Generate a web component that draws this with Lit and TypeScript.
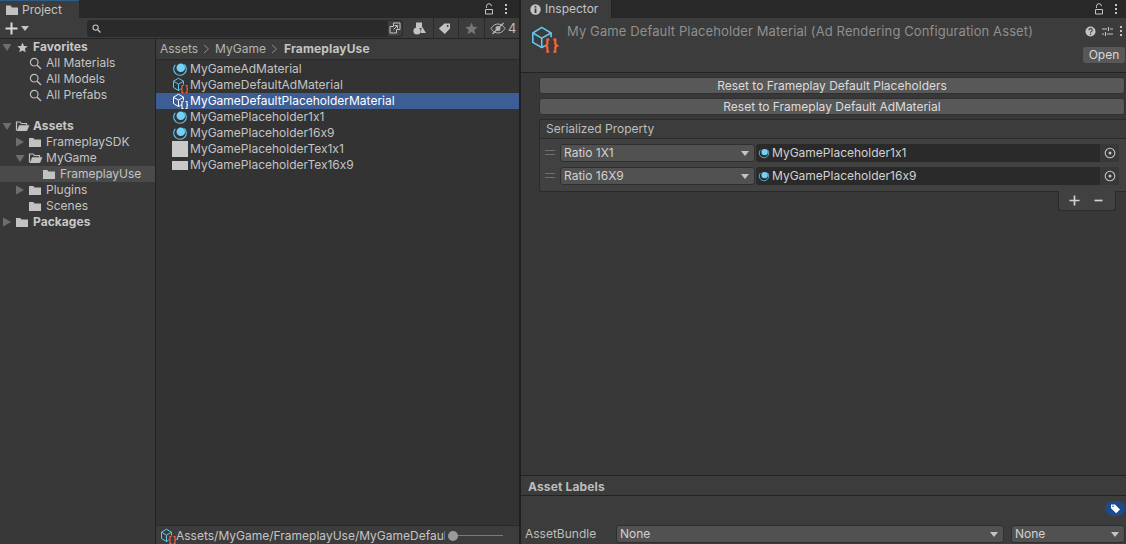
import { LitElement, html, css, svg } from "lit";
import { customElement } from "lit/decorators.js";

const icon = (w: number, h: number, body: unknown, vb = `0 0 ${w} ${h}`) =>
  html`<svg class="ic" width=${w} height=${h} viewBox=${vb} fill="none" style="width:${w}px;height:${h}px">${body}</svg>`;

const folder = (c = "#c2c2c2") =>
  icon(14, 12, svg`<path d="M1 2h4.200l1.300 1.500H13V11H1z" fill=${c}/>`);
const folderOpen = (c = "#c2c2c2") =>
  icon(15, 12, svg`<path d="M1.500 10.500V2h3.600l1.200 1.500h5.200V5" stroke=${c} stroke-width="1.200"/><path d="M2.400 10.500 4.300 5.400H14l-2 5.100z" fill=${c} stroke=${c} stroke-width=".6"/><path d="M2 10.500h9" stroke=${c}/>`);
const magnifier = () =>
  icon(13, 13, svg`<circle cx="5.200" cy="5.200" r="3.800" stroke="#bdbdbd" stroke-width="1.200"/><path d="m8 8 4 4" stroke="#bdbdbd" stroke-width="1.500"/>`);
const star = (c = "#c4c4c4", s = 11) =>
  icon(s, s, svg`<path d="M6 .5 7.600 4.300l4.100.3-3.100 2.700 1 4L6 9.200l-3.600 2.100 1-4L.3 4.600l4.100-.3z" fill=${c}/>`, "0 0 12 12");
const tri = (open: boolean) =>
  open
    ? icon(10, 8, svg`<path d="M.5 1h9L5 8z" fill="#6e6e6e"/>`)
    : icon(8, 10, svg`<path d="M0 .5 8 5 0 9.500z" fill="#6e6e6e"/>`);
const ball = (s = 16) =>
  icon(s, s, svg`<path d="M3.300 3.800A6.300 6.300 0 1 0 12.400 3.500" stroke="#62c6f1" stroke-width="1.100"/><circle cx="8.800" cy="6.800" r="4.300" fill="#74d0f7"/>`, "0 0 16 16");
const cube = (s: number, c: string, b: string) =>
  icon(s, s, svg`
    <path d="M8.500 12.300 6.500 13.500l-5-3V4.200l5-3 5 3V7.500" stroke=${c} stroke-width="1" stroke-linejoin="round"/>
    <path d="M1.500 4.200 6.500 7.200l5-3M6.500 7.200v6.300" stroke=${c} stroke-width="1"/>
    <path d="M11.500 8.500H10v2.800l-.8.700.8.700v2.800h1.500M13.500 8.500H15v2.800l.8.700-.8.700v2.800h-1.500" stroke=${b} stroke-width="1.100"/>`,
    "0 0 16 16");
const lock = () =>
  icon(10, 12, svg`<path d="M2.500 5V3.200a2.500 2.500 0 0 1 5 0" stroke="#c4c4c4"/><path d="M1.500 6.500h7v4.500h-7z" stroke="#c4c4c4"/>`);
const dots = () =>
  icon(4, 12, svg`<g fill="#c4c4c4"><rect x="1" y="1" width="2" height="2"/><rect x="1" y="5" width="2" height="2"/><rect x="1" y="9" width="2" height="2"/></g>`);
const caret = (c = "#c4c4c4") => icon(8, 5, svg`<path d="M0 0h8L4 5z" fill=${c}/>`);
const target = () =>
  icon(12, 12, svg`<circle cx="6" cy="6" r="4.800" stroke="#c4c4c4" stroke-width="1.100"/><circle cx="6" cy="6" r="1.500" fill="#c4c4c4"/>`);

type TreeRow = { label: string; depth: number; kind: string; bold?: boolean; tri?: "open" | "closed"; sel?: boolean; gap?: boolean };
const tree: TreeRow[] = [
  { label: "Favorites", depth: 0, kind: "star", bold: true, tri: "open" },
  { label: "All Materials", depth: 1, kind: "search" },
  { label: "All Models", depth: 1, kind: "search" },
  { label: "All Prefabs", depth: 1, kind: "search" },
  { label: "Assets", depth: 0, kind: "open", bold: true, tri: "open", gap: true },
  { label: "FrameplaySDK", depth: 1, kind: "folder", tri: "closed" },
  { label: "MyGame", depth: 1, kind: "open", tri: "open" },
  { label: "FrameplayUse", depth: 2, kind: "folder", sel: true },
  { label: "Plugins", depth: 1, kind: "folder", tri: "closed" },
  { label: "Scenes", depth: 1, kind: "folder" },
  { label: "Packages", depth: 0, kind: "folder", bold: true, tri: "closed" },
];

const files = [
  { label: "MyGameAdMaterial", kind: "ball" },
  { label: "MyGameDefaultAdMaterial", kind: "cube" },
  { label: "MyGameDefaultPlaceholderMaterial", kind: "cube", sel: true },
  { label: "MyGamePlaceholder1x1", kind: "ball" },
  { label: "MyGamePlaceholder16x9", kind: "ball" },
  { label: "MyGamePlaceholderTex1x1", kind: "tex1" },
  { label: "MyGamePlaceholderTex16x9", kind: "tex2" },
];

@customElement("project-panel")
class ProjectPanel extends LitElement {
  static styles = css`
    :host { display: flex; flex-direction: column; width: 519px; height: 544px; background: #383838; color: #c4c4c4; font: 12px/16px Inter, "Liberation Sans", sans-serif; font-feature-settings: "calt" 0; }
    .ic { display: block; flex: none; }
    .tabs { height: 18px; flex: none; display: flex; background: #282828; align-items: center; }
    .tab { width: 79px; height: 18px; box-sizing: border-box; background: #3c3c3c; border-top: 1px solid #2c5d87; display: flex; align-items: center; gap: 4px; padding-left: 6px; }
    .acts { margin-left: auto; display: flex; align-items: center; gap: 10px; padding-right: 11px; }
    .toolbar { height: 20px; flex: none; display: flex; align-items: center; background: #3c3c3c; border-bottom: 1px solid #232323; box-sizing: content-box; }
    .add { width: 87px; display: flex; align-items: center; padding-left: 5px; gap: 3px; box-sizing: border-box; }
    .search { width: 316px; height: 17px; background: #2a2a2a; border-radius: 4px; display: flex; align-items: center; justify-content: space-between; padding-left: 5px; box-sizing: border-box; }
    .expand { width: 16px; height: 17px; background: #3f3f3f; border: 1px solid #2a2a2a; border-radius: 0 4px 4px 0; box-sizing: border-box; display: grid; place-items: center; }
    .tools { display: flex; margin-left: 3px; height: 20px; flex: 1; }
    .tool { display: grid; place-items: center; height: 20px; border-left: 1px solid #2b2b2b; box-sizing: border-box; }
    .tool:first-child { border-left: 0; }
    .t1 { width: 27px; } .t2 { width: 25px; padding-right: 3px; } .t3 { width: 26px; } .t4 { flex: 1; display: flex; align-items: center; gap: 2px; padding-left: 5px; font-size: 13px; color: #bdbdbd; }
    .main { flex: 1; min-height: 0; display: flex; }
    .tree { width: 156px; flex: none; box-sizing: border-box; border-right: 1px solid #232323; background: #383838; }
    .row { height: 16px; display: flex; align-items: center; white-space: nowrap; }
    .row.gap { margin-top: 15px; }
    .row.sel { background: #4a4a4a; }
    .row b { font-weight: 700; color: #c8c8c8; letter-spacing: .05px; }
    .tri { width: 14px; flex: none; display: flex; justify-content: center; }
    .ico { width: 16px; flex: none; display: flex; justify-content: center; margin-right: 3px; }
    .files { flex: 1; min-width: 0; display: flex; flex-direction: column; background: #333333; }
    .crumb { height: 20px; flex: none; display: flex; align-items: center; padding-left: 4px; gap: 5px; background: #3c3c3c; border-bottom: 1px solid #2a2a2a; color: #b4b4b4; }
    .crumb b { color: #c4c4c4; font-weight: 700; letter-spacing: .15px; margin-left: 1px; }
    .list { flex: 1; padding-top: 1px; }
    .file { height: 16px; display: flex; align-items: center; padding-left: 16px; gap: 2px; white-space: nowrap; }
    .file.sel { background: #3d5d95; color: #fff; }
    .tex { width: 16px; height: 16px; flex: none; display: flex; align-items: center; }
    .tex i { display: block; width: 16px; background: #c9c9c9; }
    .tex i.a { height: 16px; }
    .tex i.b { height: 9px; }
    .status { height: 17px; padding-top: 1px; flex: none; display: flex; align-items: center; background: #3c3c3c; border-top: 1px solid #2a2a2a; padding-left: 4px; }
    .path { width: 269px; overflow: hidden; white-space: nowrap; color: #c4c4c4; }
    .slider { width: 55px; margin-left: 3px; display: flex; align-items: center; height: 10px; }
    .track { flex: 1; height: 1px; background: #7a7a7a; }
    .knob { width: 10px; height: 10px; border-radius: 50%; background: #9a9a9a; flex: none; }
  `;
  private treeIcon(k: string) {
    if (k === "star") return star();
    if (k === "search") return magnifier();
    if (k === "open") return folderOpen();
    return folder();
  }
  private fileIcon(k: string, sel?: boolean) {
    if (k === "ball") return ball();
    if (k === "cube") return sel ? cube(16, "#fff", "#fff") : cube(16, "#62c6f1", "#ff6436");
    return html`<span class="tex"><i class=${k === "tex1" ? "a" : "b"}></i></span>`;
  }
  render() {
    return html`
      <div class="tabs">
        <div class="tab">${icon(12, 12, svg`<path d="M0 1.500h4.500L6 3.500h6V11H0z" fill="#c2c2c2"/>`)}<span>Project</span></div>
        <div class="acts">${lock()}${dots()}</div>
      </div>
      <div class="toolbar">
        <div class="add">
          ${icon(13, 13, svg`<path d="M6.500 .5v12M.5 6.500h12" stroke="#d8d8d8" stroke-width="2"/>`)}${caret()}
        </div>
        <div class="search">
          ${icon(9, 9, svg`<circle cx="3.600" cy="3.600" r="2.600" stroke="#c4c4c4" stroke-width="1.100"/><path d="m5.500 5.500 3 3" stroke="#c4c4c4" stroke-width="1.300"/>`)}
          <div class="expand">${icon(12, 12, svg`<path d="M4.500 1h6.500v6.500H7.500V11H1V4.500h3.500z" stroke="#c4c4c4"/><path d="m4.500 7.500 3.500-3.500M5.500 3.500H8.500V6.500" stroke="#c4c4c4"/>`)}</div>
        </div>
        <div class="tools">
          <div class="tool t1">${icon(13, 13, svg`<rect x="3" y=".5" width="6" height="5.500" fill="#c2c2c2"/><circle cx="4" cy="9" r="3.600" fill="#c2c2c2"/><path d="M9 4.500 13 11H7.500z" fill="#c2c2c2"/>`)}</div>
          <div class="tool t2">${icon(13, 13, svg`<path d="M.8 6.500 6.500 1.500H12v5L6.800 12z" fill="#c2c2c2"/><circle cx="9.600" cy="3.900" r="1" fill="#3c3c3c"/>`)}</div>
          <div class="tool t3">${star("#767676", 13)}</div>
          <div class="tool t4">
            ${icon(16, 13, svg`<path d="M1 6.500C3 3.300 5.500 2 8 2s5 1.300 7 4.500C13 9.700 10.500 11 8 11S3 9.700 1 6.500z" stroke="#b4b4b4"/><circle cx="8" cy="6.500" r="2.500" fill="#b4b4b4"/><path d="M2.500 12 13.500 1" stroke="#b4b4b4" stroke-width="1.200"/>`)}
            <span>4</span>
          </div>
        </div>
      </div>
      <div class="main">
        <div class="tree">
          ${tree.map(
            (r) => html`<div class="row ${r.sel ? "sel" : ""} ${r.gap ? "gap" : ""}" style="padding-left:${r.depth ? r.depth * 14 - 1 : 0}px">
              <span class="tri">${r.tri ? tri(r.tri === "open") : ""}</span>
              <span class="ico">${this.treeIcon(r.kind)}</span>
              ${r.bold ? html`<b>${r.label}</b>` : html`<span>${r.label}</span>`}
            </div>`
          )}
        </div>
        <div class="files">
          <div class="crumb">
            <span>Assets</span>${icon(7, 10, svg`<path d="m1 1 4.500 4L1 9" stroke="#8a8a8a"/>`)}
            <span>MyGame</span>${icon(7, 10, svg`<path d="m1 1 4.500 4L1 9" stroke="#8a8a8a"/>`)}
            <b>FrameplayUse</b>
          </div>
          <div class="list">
            ${files.map(
              (f) => html`<div class="file ${f.sel ? "sel" : ""}">${this.fileIcon(f.kind, f.sel)}<span>${f.label}</span></div>`
            )}
          </div>
          <div class="status">
            ${cube(16, "#62c6f1", "#ff6436")}
            <div class="path">Assets/MyGame/FrameplayUse/MyGameDefault</div>
            <div class="slider"><span class="knob"></span><span class="track"></span></div>
          </div>
        </div>
      </div>
    `;
  }
}

@customElement("inspector-panel")
class InspectorPanel extends LitElement {
  static styles = css`
    :host { display: flex; flex-direction: column; flex: 1; min-width: 0; height: 544px; background: #383838; color: #c4c4c4; font: 12px/16px Inter, "Liberation Sans", sans-serif; font-feature-settings: "calt" 0; }
    .ic { display: block; flex: none; }
    .tabs { height: 18px; flex: none; display: flex; background: #282828; align-items: center; }
    .tab { width: 91px; height: 18px; background: #3c3c3c; display: flex; align-items: center; gap: 4px; padding-left: 9px; box-sizing: border-box; border-right: 1px solid #232323; }
    .acts { margin-left: auto; display: flex; align-items: center; gap: 10px; padding-right: 8px; }
    .head { height: 55px; flex: none; box-sizing: border-box; background: #3c3c3c; border-bottom: 1px solid #232323; display: grid; grid-template-columns: 46px 1fr auto; padding-top: 5px; }
    .bigicon { padding: 3px 0 0 9px; }
    .title { font-size: 13px; line-height: 16px; color: #8f8f8f; white-space: nowrap; letter-spacing: .11px; }
    .hright { display: flex; flex-direction: column; align-items: flex-end; gap: 10px; padding-right: 1px; }
    .hicons { display: flex; align-items: center; gap: 6px; height: 12px; padding: 2px 2px 0 0; }
    .open { width: 42px; height: 16px; background: #585858; border-radius: 3px; text-align: center; line-height: 16px; color: #d8d8d8; }
    .body { flex: 1; min-height: 0; padding: 4px 1px 0 18px; display: flex; flex-direction: column; }
    .btn { height: 17px; background: #585858; border: 1px solid #303030; border-radius: 3px; text-align: center; line-height: 15px; color: #dcdcdc; margin-bottom: 4px; box-sizing: border-box; }
    .box { margin-right: -1px; background: #414141; border: 1px solid #2a2a2a; border-right: 0; border-radius: 3px 0 0 3px; display: flex; flex-direction: column; height: 73px; box-sizing: border-box; }
    .boxh { height: 18px; flex: none; background: #3c3c3c; border-bottom: 1px solid #2a2a2a; padding-left: 6px; line-height: 17px; color: #bdbdbd; border-radius: 3px 0 0 0; }
    .items { padding: 5px 7px 0 5px; display: grid; gap: 5px; }
    .item { display: grid; grid-template-columns: 15px 195px 1fr; height: 18px; align-items: stretch; }
    .grip { display: flex; flex-direction: column; gap: 3px; justify-content: center; padding-bottom: 2px; }
    .grip i { display: block; width: 10px; height: 1px; background: #6e6e6e; }
    .drop { background: #515151; border: 1px solid #2f2f2f; border-radius: 3px; display: flex; align-items: center; justify-content: space-between; padding: 0 5px 0 3px; box-sizing: border-box; color: #d2d2d2; }
    .obj { background: #2a2a2a; border-radius: 3px; margin-left: 1px; display: flex; align-items: center; gap: 2px; padding-left: 2px; color: #d2d2d2; }
    .pick { margin-left: auto; width: 19px; align-self: stretch; background: #383838; border-radius: 0 3px 3px 0; display: grid; place-items: center; }
    .foot { align-self: flex-end; width: 58px; height: 20px; box-sizing: border-box; margin: -1px 9px 0 0; padding-right: 2px; background: #414141; border: 1px solid #2a2a2a; border-top: 0; border-radius: 0 0 3px 3px; display: flex; align-items: center; justify-content: center; gap: 14px; }
    .labels { height: 69px; flex: none; background: #3c3c3c; border-top: 1px solid #232323; display: flex; flex-direction: column; box-sizing: border-box; }
    .labh { height: 20px; flex: none; font-weight: 700; padding-left: 7px; line-height: 22px; border-bottom: 1px solid #232323; color: #bdbdbd; letter-spacing: .15px; box-sizing: border-box; }
    .tagrow { height: 29px; flex: none; display: flex; justify-content: flex-end; align-items: center; padding: 0 1px 4px 0; box-sizing: border-box; }
    .tag { width: 20px; height: 15px; border-radius: 8px; background: #1f4a8a; display: grid; place-items: center; }
    .bundle { display: grid; grid-template-columns: 92px 388px 121px; height: 16px; align-items: stretch; padding-left: 3px; }
    .bundle > span { color: #bdbdbd; line-height: 18px; padding-left: 1px; }
    .drop.b2 { margin-left: 7px; }
  `;
  render() {
    return html`
      <div class="tabs">
        <div class="tab">${icon(11, 11, svg`<circle cx="5.500" cy="5.500" r="5.200" fill="#c4c4c4"/><rect x="4.600" y="4.500" width="1.800" height="4.500" fill="#3c3c3c"/><rect x="4.600" y="2" width="1.800" height="1.600" fill="#3c3c3c"/>`)}<span>Inspector</span></div>
        <div class="acts">${lock()}${dots()}</div>
      </div>
      <div class="head">
        <div class="bigicon">${icon(30, 30, svg`
          <path d="M16 21 12.500 23 3 17.500v-10l9.500-6 10 6V12" stroke="#62c6f1" stroke-width="1.700" stroke-linejoin="round"/>
          <path d="M3 7.500 12.500 13l10-5.500M12.500 13v10" stroke="#62c6f1" stroke-width="1.700"/>
          <path d="M20.500 14.500h-2v5l-2 1.500 2 1.500v5h2M25 14.500h2v5l2 1.500-2 1.500v5h-2" stroke="#ff6436" stroke-width="2.200"/>`, "0 0 32 32")}</div>
        <div class="title">My Game Default Placeholder Material (Ad Rendering Configuration Asset)</div>
        <div class="hright">
          <div class="hicons">
            ${icon(11, 11, svg`<circle cx="5.500" cy="5.500" r="5" fill="#c4c4c4"/><path d="M3.800 4.200c.2-2.200 3.500-2 3.500 0 0 1.200-1.800 1.200-1.800 2.500" stroke="#3c3c3c" stroke-width="1.100"/><rect x="4.900" y="7.700" width="1.300" height="1.300" fill="#3c3c3c"/>`)}
            ${icon(11, 11, svg`<path d="M0 3h5M8 3h3M0 8h2M5 8h6M6.500 1v4M3.500 6v4" stroke="#c4c4c4" stroke-width="1.100"/>`)}
            ${dots()}
          </div>
          <div class="open">Open</div>
        </div>
      </div>
      <div class="body">
        <div class="btn">Reset to Frameplay Default Placeholders</div>
        <div class="btn">Reset to Frameplay Default AdMaterial</div>
        <div class="box">
          <div class="boxh">Serialized Property</div>
          <div class="items">
            ${[["Ratio 1X1", "MyGamePlaceholder1x1"], ["Ratio 16X9", "MyGamePlaceholder16x9"]].map(
              ([a, b]) => html`<div class="item">
                <div class="grip"><i></i><i></i></div>
                <div class="drop"><span>${a}</span>${caret()}</div>
                <div class="obj">${ball(12)}<span>${b}</span><span class="pick">${target()}</span></div>
              </div>`
            )}
          </div>
        </div>
        <div class="foot">
          ${icon(11, 11, svg`<path d="M5.500 .5v10M.5 5.500h10" stroke="#d2d2d2" stroke-width="1.700"/>`)}
          ${icon(9, 11, svg`<path d="M.5 5.500h8" stroke="#d2d2d2" stroke-width="1.700"/>`)}
        </div>
      </div>
      <div class="labels">
        <div class="labh">Asset Labels</div>
        <div class="tagrow"><div class="tag">${icon(11, 11, svg`<path fill-rule="evenodd" d="M1 1.500h4l5 5-3.800 3.800-5.200-5zM3 2.500a.8.8 0 1 0 0 1.600.8.8 0 0 0 0-1.600z" fill="#fff"/>`)}</div></div>
        <div class="bundle">
          <span>AssetBundle</span>
          <div class="drop"><span>None</span>${caret()}</div>
          <div class="drop b2"><span>None</span>${caret()}</div>
        </div>
      </div>
    `;
  }
}

@customElement("app-root")
export class AppRoot extends LitElement {
  static styles = css`
    :host { display: flex; width: 1126px; height: 544px; overflow: hidden; background: #191919; }
    .gutter { width: 2px; flex: none; background: #1f1f1f; }
  `;
  render() {
    return html`<project-panel></project-panel><div class="gutter"></div><inspector-panel></inspector-panel>`;
  }
}
